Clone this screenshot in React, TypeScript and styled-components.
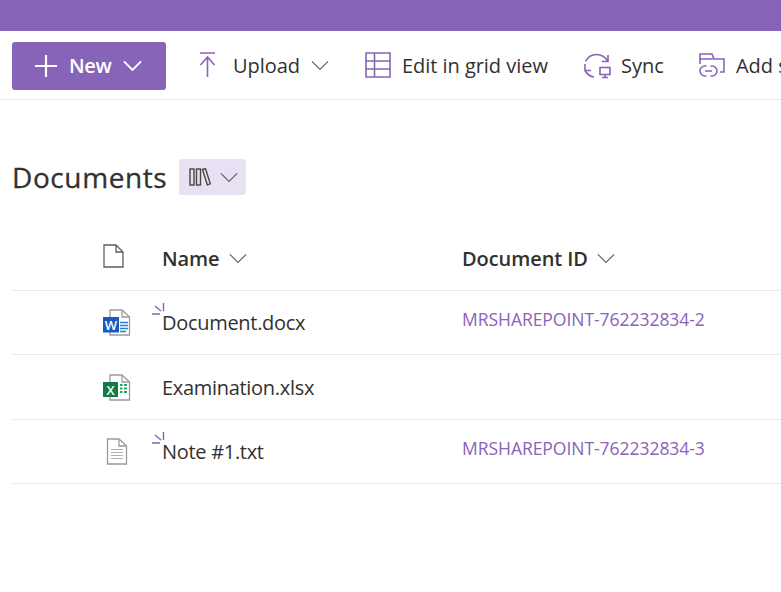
import React from 'react';
import styled, { createGlobalStyle } from 'styled-components';

const GlobalStyle = createGlobalStyle`
  html, body {
    margin: 0;
    padding: 0;
    background: #fff;
    overflow: hidden;
  }
  body {
    font-family: 'Open Sans', 'Noto Sans', 'Liberation Sans', sans-serif;
    color: #323130;
  }
`;

const Page = styled.div`
  width: 781px;
  height: 592px;
  overflow: hidden;
`;

const TopBar = styled.div`
  height: 31px;
  background: #8764b8;
`;

const CommandBar = styled.div`
  height: 68px;
  display: flex;
  align-items: center;
  padding: 0 0 0 12px;
  border-bottom: 1px solid #eaeaea;
  white-space: nowrap;
  overflow: hidden;
`;

const NewButton = styled.button`
  width: 154px;
  height: 48px;
  margin-top: 1px;
  margin-right: 32px;
  flex: none;
  display: flex;
  align-items: center;
  padding: 0 0 0 23px;
  gap: 12px;
  border: 0;
  border-radius: 3px;
  background: #8764b8;
  color: #fff;
  font: 600 20px 'Open Sans', sans-serif;
  letter-spacing: -0.4px;
`;

const Command = styled.div<{ $width: number }>`
  flex: none;
  width: ${(p) => p.$width}px;
  display: flex;
  align-items: center;
  font-size: 20px;
  letter-spacing: -0.04px;
  color: #323130;
`;

const CommandIcon = styled.svg<{ $width: number; $height: number; $gap: number }>`
  flex: none;
  width: ${(p) => p.$width}px;
  height: ${(p) => p.$height}px;
  margin-right: ${(p) => p.$gap}px;
  fill: none;
  stroke: #8764b8;
  stroke-width: 1.6;
`;

const CommandChevron = styled.span`
  display: flex;
  margin-left: 11px;
`;

const Content = styled.div`
  padding: 0 0 0 12px;
`;

const TitleRow = styled.div`
  display: flex;
  align-items: center;
  height: 36px;
  margin-top: 59px;
`;

const Title = styled.h1`
  margin: 0;
  font-size: 28px;
  font-weight: 400;
  letter-spacing: 0.6px;
  color: #323130;
  -webkit-text-stroke: 0.3px #323130;
`;

const ViewBadge = styled.div`
  width: 67px;
  height: 36px;
  box-sizing: border-box;
  margin-left: 12px;
  padding-left: 10px;
  display: flex;
  align-items: center;
  gap: 9px;
  border-radius: 3px;
  background: #e8e0f3;
`;

const Table = styled.div`
  margin-top: 32px;
`;

const Row = styled.div<{ $height: number }>`
  display: grid;
  grid-template-columns: 150px 300px 1fr;
  align-items: center;
  box-sizing: border-box;
  height: ${(p) => p.$height}px;
  border-bottom: 1px solid #ebebeb;
`;

const IconCell = styled.div`
  display: flex;
  justify-content: flex-end;
  width: 119px;
`;

const HeaderIcon = styled.div`
  display: flex;
  margin-right: 7px;
  margin-top: -6px;
`;

const HeaderLabel = styled.div`
  display: flex;
  align-items: center;
  gap: 9px;
  font-size: 20px;
  font-weight: 600;
  letter-spacing: -0.08px;
  color: #323130;
`;

const NameCell = styled.div`
  position: relative;
  font-size: 20px;
  letter-spacing: -0.3px;
  color: #323130;
`;

const NewMark = styled.svg`
  position: absolute;
  left: -10px;
  top: -6px;
  width: 13px;
  height: 13px;
  fill: none;
  stroke: #8764b8;
  stroke-width: 1.4;
`;

const IdCell = styled.div`
  font-size: 17.5px;
  letter-spacing: -0.04px;
  color: #8764b8;
  margin-top: -7px;
`;

const Chevron: React.FC<{ size?: number; color?: string; width?: number }> = ({
  size = 18,
  color = '#605e5c',
  width = 1.2
}) => (
  <svg width={size} height={size * 0.6} viewBox="0 0 20 12" fill="none" stroke={color} strokeWidth={width}>
    <path d="M1 1.5 L10 10.5 L19 1.5" />
  </svg>
);

const Plus = () => (
  <svg width="22" height="22" viewBox="0 0 22 22" stroke="#fff" strokeWidth="2.2" style={{ flex: 'none' }}>
    <path d="M11 0 V22 M0 11 H22" />
  </svg>
);

const UploadIcon = () => (
  <CommandIcon viewBox="0 0 20 28" $width={20} $height={28} $gap={15}>
    <path d="M2 2 H17 M9.5 26 V6 M2.5 14 L9.5 6 L16.5 14" />
  </CommandIcon>
);

const GridIcon = () => (
  <CommandIcon viewBox="0 0 26 26" $width={26} $height={26} $gap={11}>
    <path d="M1 1 H25 V25 H1 Z M1 9 H25 M1 17 H25 M9.5 1 V25" />
  </CommandIcon>
);

const SyncIcon = () => (
  <CommandIcon viewBox="0 0 27 27" $width={27} $height={27} $gap={10}>
    <path d="M1.5 9.5 C4 4.5 8 2.5 12.5 2.5 C17 2.5 21 4.5 24 9.5 M24 3 V9.5 H18" />
    <path d="M1 12 V18.5 H7 M1 18.5 C3 22 6 24.5 10 25" />
    <rect x="16" y="15.5" width="10" height="7" />
    <path d="M21 22.5 V25.5 M18 25.5 H24" />
  </CommandIcon>
);

const AddLinkIcon = () => (
  <CommandIcon viewBox="0 0 26 26" $width={26} $height={26} $gap={11}>
    <path d="M1 12 V2 H13 L15 7 H25 V20 H21 M1 7 H14" />
    <path d="M7.5 14 H6 A5 5 0 0 0 6 24 H7.5 M11.5 14 H13 A5 5 0 0 1 13 24 H11.5 M6 19 H13" />
  </CommandIcon>
);

const LibraryIcon = () => (
  <svg width="22" height="18" viewBox="0 0 22 18" fill="none" stroke="#484644" strokeWidth="1.4">
    <rect x="1" y="1" width="4" height="16" />
    <rect x="7.5" y="1" width="4" height="16" />
    <path d="M13.5 1.5 L16.5 0.7 L21.3 15.8 L18.3 16.8 Z" />
  </svg>
);

const BlankFileIcon = () => (
  <svg width="21" height="24" viewBox="0 0 21 24" fill="#fff" stroke="#605e5c" strokeWidth="1.3">
    <path d="M1 1 H13 L20 8 V23 H1 Z M13 1 V8 H20" />
  </svg>
);

const DocBody = () => (
  <path d="M7 1 H19 L26.5 8 V26 H7 Z" fill="#fff" stroke="#9a9a9a" strokeWidth="1.3" />
);

const WordIcon = () => (
  <svg width="28" height="27" viewBox="0 0 28 27" style={{ display: 'block' }}>
    <DocBody />
    <path d="M19 1 V8 H26.5" fill="none" stroke="#9a9a9a" strokeWidth="1.3" />
    <path d="M17 13.5 H25 M17 16.5 H25 M17 19.5 H25 M17 22.5 H23" stroke="#2b7cd3" strokeWidth="1.3" />
    <rect x="0" y="8" width="16" height="15.5" fill="#185abd" />
    <text x="8" y="20.5" textAnchor="middle" fill="#fff" fontSize="13" fontWeight="600" fontFamily="'Open Sans', sans-serif">W</text>
  </svg>
);

const ExcelIcon = () => (
  <svg width="28" height="27" viewBox="0 0 28 27" style={{ display: 'block' }}>
    <DocBody />
    <path d="M19 1 V8 H26.5" fill="none" stroke="#9a9a9a" strokeWidth="1.3" />
    <path d="M17 10 H19.5 V12 H17 Z M21 10 H24 V12 H21 Z M17 13.5 H19.5 V15.5 H17 Z M21 13.5 H24 V15.5 H21 Z M17 17 H19.5 V19 H17 Z M21 17 H24 V19 H21 Z" fill="#21a366" />
    <rect x="0" y="8" width="15" height="15" fill="#107c41" />
    <text x="7.5" y="20.5" textAnchor="middle" fill="#fff" fontSize="13" fontWeight="600" fontFamily="'Open Sans', sans-serif">X</text>
  </svg>
);

const TextFileIcon = () => (
  <svg width="28" height="27" viewBox="0 0 28 27" style={{ display: 'block' }}>
    <path d="M4.5 1 H16 L23.5 8 V26 H4.5 Z" fill="#fff" stroke="#9a9a9a" strokeWidth="1.3" />
    <path d="M16 1 V8 H23.5" fill="none" stroke="#9a9a9a" strokeWidth="1.3" />
    <path d="M8 11.5 H20 M8 14.5 H20 M8 17.5 H20 M8 20.5 H20" stroke="#b0b0b0" strokeWidth="1.1" />
  </svg>
);

const Sparkle = () => (
  <NewMark viewBox="0 0 13 13">
    <path d="M0 11 H8 M3 3 L9 8 M11.5 0 V8" />
  </NewMark>
);

interface FileItem {
  name: string;
  icon: React.ReactNode;
  docId?: string;
  height: number;
  isNew?: boolean;
}

const files: FileItem[] = [
  { name: 'Document.docx', icon: <WordIcon />, docId: 'MRSHAREPOINT-762232834-2', height: 64, isNew: true },
  { name: 'Examination.xlsx', icon: <ExcelIcon />, height: 65 },
  { name: 'Note #1.txt', icon: <TextFileIcon />, docId: 'MRSHAREPOINT-762232834-3', height: 64, isNew: true }
];

export default function App() {
  return (
    <Page>
      <GlobalStyle />
      <TopBar />
      <CommandBar>
        <NewButton>
          <Plus />
          <span>New</span>
          <Chevron size={19} color="#fff" width={2} />
        </NewButton>
        <Command $width={167}>
          <UploadIcon />
          Upload
          <CommandChevron>
            <Chevron />
          </CommandChevron>
        </Command>
        <Command $width={219}>
          <GridIcon />
          Edit in grid view
        </Command>
        <Command $width={115}>
          <SyncIcon />
          Sync
        </Command>
        <Command $width={120}>
          <AddLinkIcon />
          Add shortcut
        </Command>
      </CommandBar>
      <Content>
        <TitleRow>
          <Title>Documents</Title>
          <ViewBadge>
            <LibraryIcon />
            <Chevron />
          </ViewBadge>
        </TitleRow>
        <Table>
          <Row $height={64}>
            <IconCell>
              <HeaderIcon>
                <BlankFileIcon />
              </HeaderIcon>
            </IconCell>
            <HeaderLabel>
              Name <Chevron />
            </HeaderLabel>
            <HeaderLabel>
              Document ID <Chevron />
            </HeaderLabel>
          </Row>
          {files.map((file) => (
            <Row key={file.name} $height={file.height}>
              <IconCell>{file.icon}</IconCell>
              <NameCell>
                {file.isNew ? <Sparkle /> : null}
                {file.name}
              </NameCell>
              {file.docId ? <IdCell>{file.docId}</IdCell> : <div />}
            </Row>
          ))}
        </Table>
      </Content>
    </Page>
  );
}
